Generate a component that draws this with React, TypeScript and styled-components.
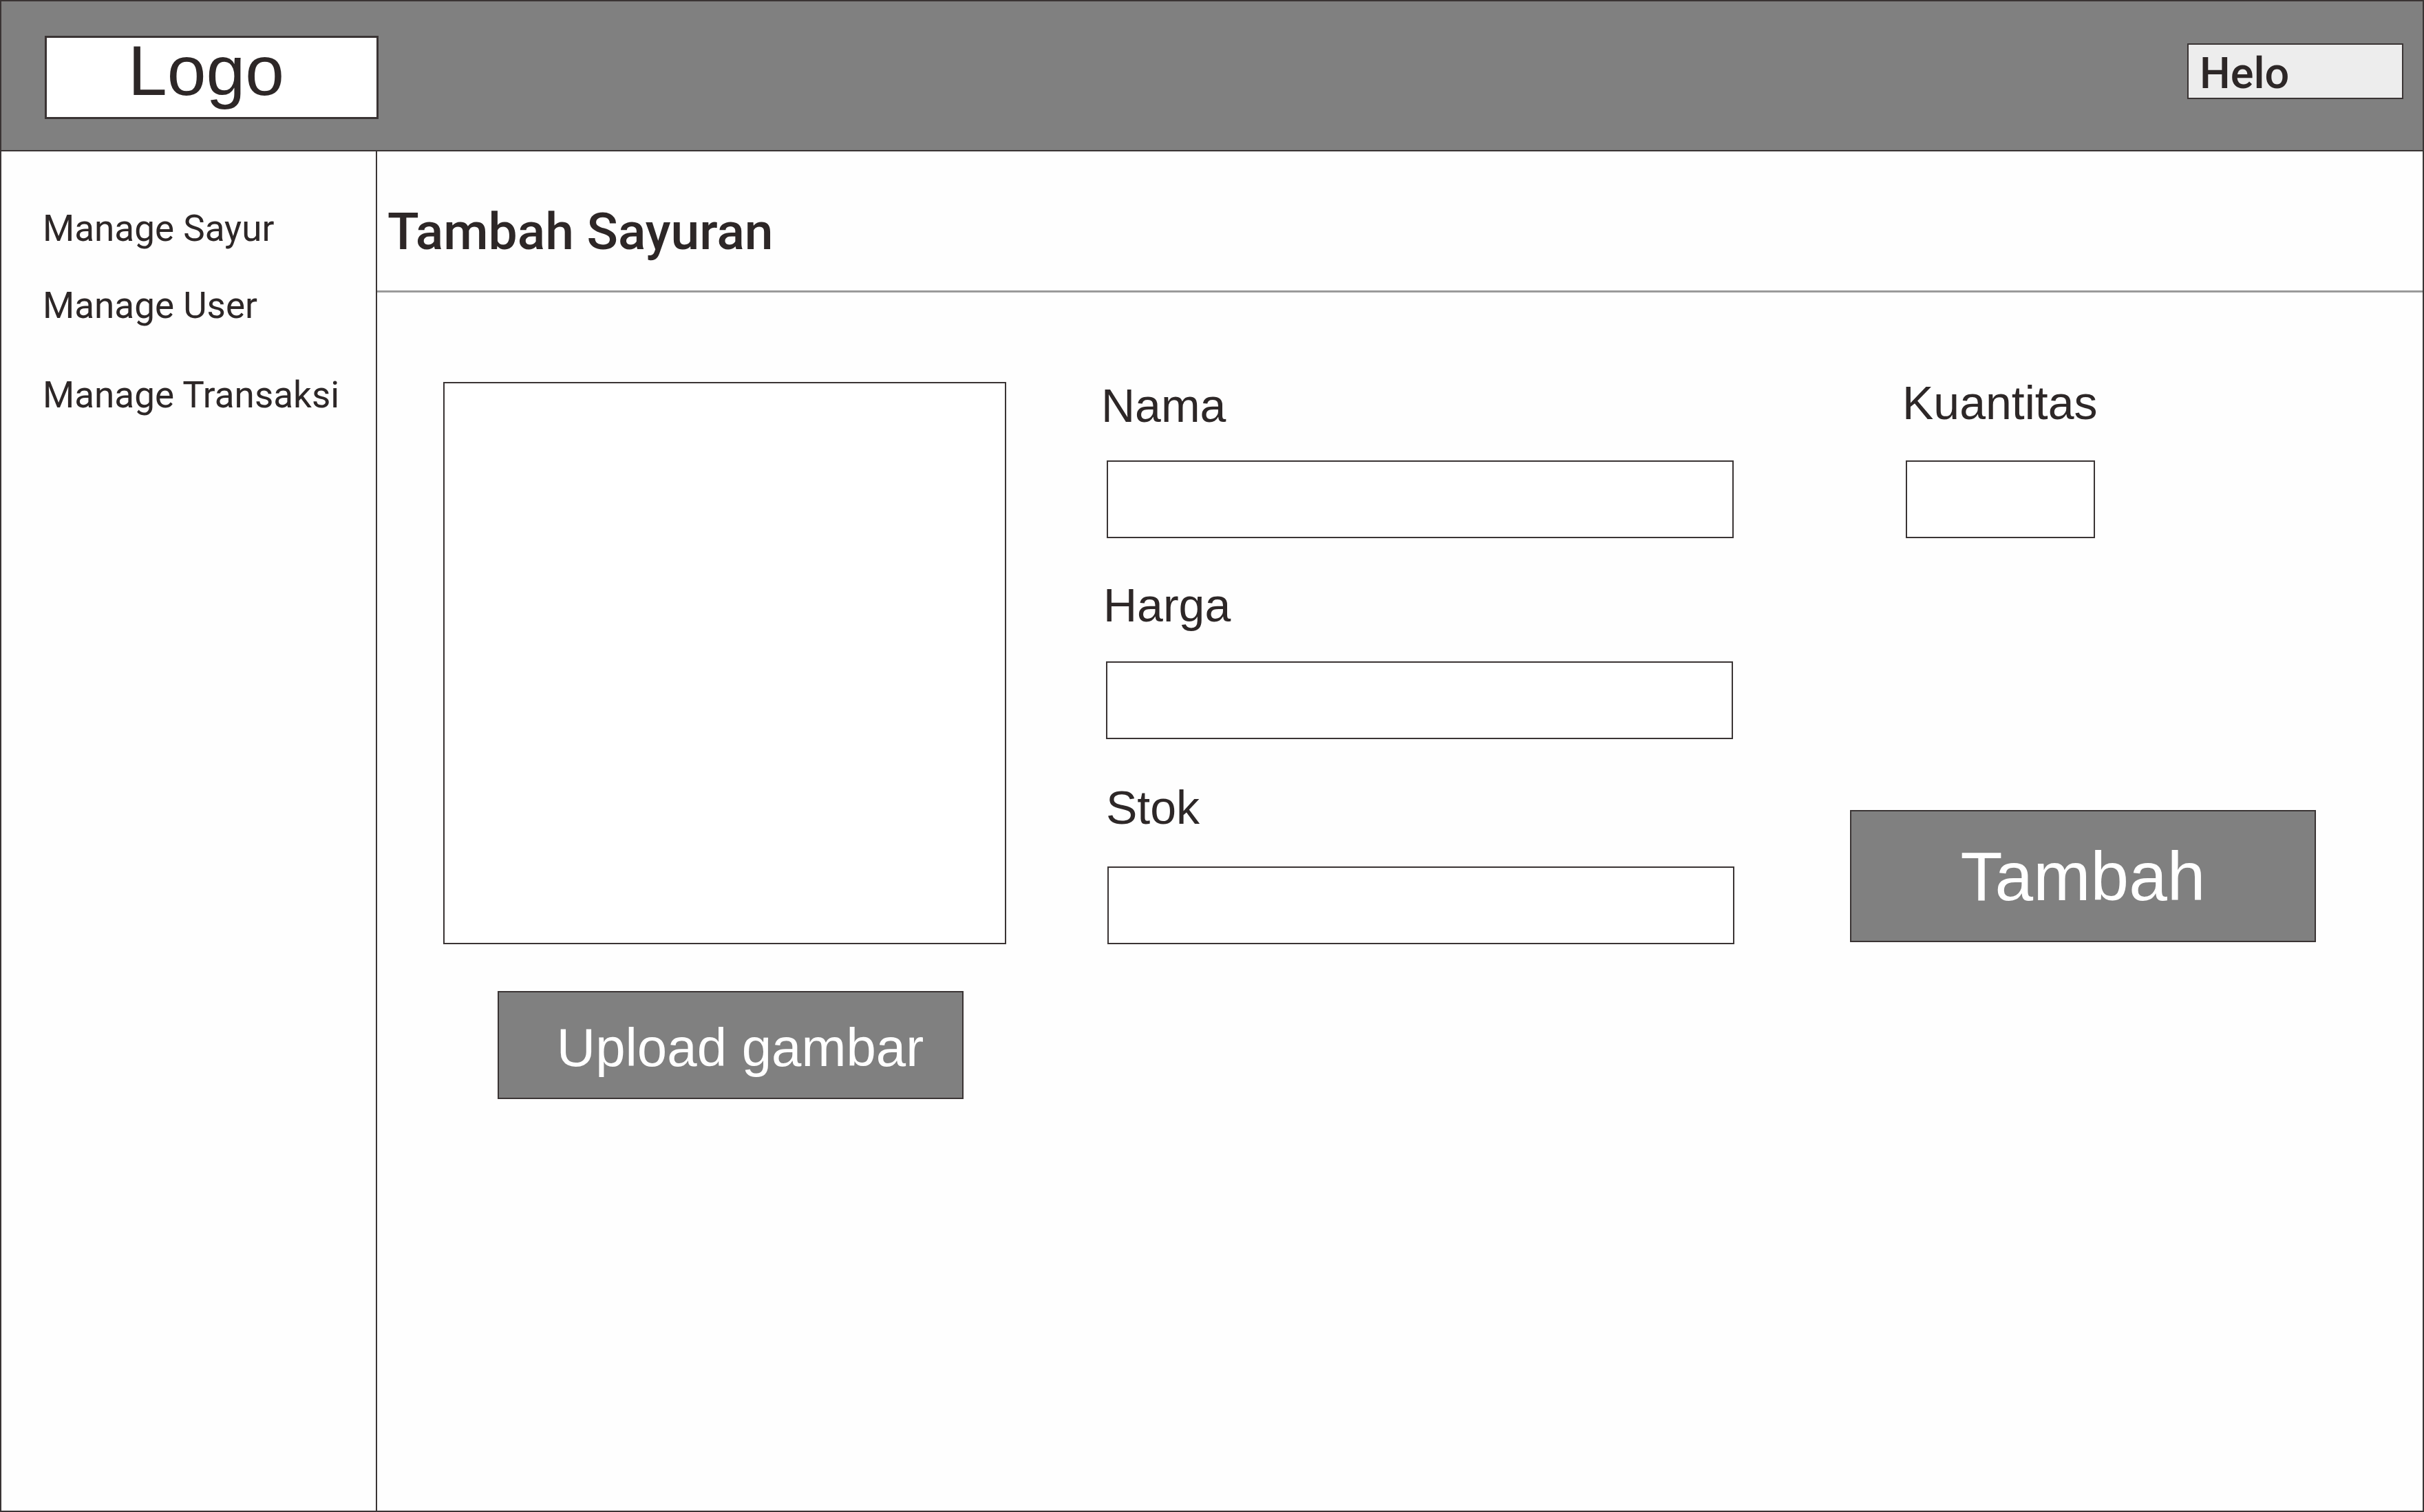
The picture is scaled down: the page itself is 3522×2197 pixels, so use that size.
import React from "react";
import styled, { createGlobalStyle } from "styled-components";

const INK = "#2d2727";
const LINE = "#3a3434";

const GlobalStyle = createGlobalStyle`
  html, body {
    margin: 0;
    padding: 0;
    background: #fefefe;
  }
  *, *::before, *::after {
    box-sizing: border-box;
  }
  body {
    font-family: "Liberation Sans", Arial, sans-serif;
    color: ${INK};
    overflow: hidden;
  }
`;

const Page = styled.div`
  width: 3522px;
  height: 2197px;
  border: 2px solid ${LINE};
  background: #fefefe;
  display: flex;
  flex-direction: column;
  overflow: hidden;
`;

const Header = styled.header`
  flex: none;
  height: 218px;
  background: #808080;
  border-bottom: 2px solid ${LINE};
  display: flex;
  align-items: flex-start;
  justify-content: space-between;
  padding: 50px 28px 0 63px;
`;

const LogoBox = styled.div`
  width: 485px;
  height: 121px;
  background: #ffffff;
  border: 3px solid ${LINE};
  display: flex;
  justify-content: center;
  align-items: flex-start;
  padding-right: 16px;
  font-family: "Liberation Sans", Arial, sans-serif;
  font-size: 102px;
  line-height: 97px;
  color: ${INK};
`;

const UserBox = styled.div`
  width: 314px;
  height: 81px;
  margin-top: 11px;
  background: #ededed;
  border: 2px solid ${LINE};
  padding: 10px 16px 0;
  font-family: Roboto, "Noto Sans", sans-serif;
  font-weight: 500;
  font-size: 63px;
  line-height: 1;
  color: ${INK};
`;

const Body = styled.div`
  flex: 1;
  display: flex;
  min-height: 0;
`;

const Sidebar = styled.nav`
  flex: none;
  width: 546px;
  border-right: 2px solid ${LINE};
  display: flex;
  flex-direction: column;
  align-items: flex-start;
  padding: 86px 0 0 60px;
`;

const NavItem = styled.div<{ $space: number }>`
  margin-top: ${(p) => p.$space}px;
  font-family: Roboto, "Noto Sans", sans-serif;
  font-weight: 400;
  font-size: 53px;
  line-height: 1;
  color: ${INK};
  white-space: nowrap;
`;

const Main = styled.main`
  flex: 1;
  display: flex;
  flex-direction: column;
  min-width: 0;
`;

const TitleBar = styled.div`
  padding: 79px 0 48px 15px;
  border-bottom: 3px solid #9a9a9a;
`;

const Title = styled.h1`
  margin: 0;
  font-family: Roboto, "Noto Sans", sans-serif;
  font-weight: 500;
  font-size: 75px;
  line-height: 1;
  color: ${INK};
`;

const FormArea = styled.div`
  display: flex;
  align-items: flex-start;
  padding: 130px 0 0 96px;
`;

const Column = styled.div<{ $width: number; $offset?: number }>`
  flex: none;
  width: ${(p) => p.$width}px;
  margin-left: ${(p) => p.$offset ?? 0}px;
  display: flex;
  flex-direction: column;
  align-items: flex-start;
`;

const ImageBox = styled.div`
  width: 818px;
  height: 817px;
  border: 2px solid ${LINE};
  background: #ffffff;
`;

const ActionButton = styled.button<{
  $w: number;
  $h: number;
  $size: number;
  $top: number;
  $left?: number;
  $padLeft?: number;
  $padTop?: number;
}>`
  appearance: none;
  width: ${(p) => p.$w}px;
  height: ${(p) => p.$h}px;
  margin: ${(p) => p.$top}px 0 0 ${(p) => p.$left ?? 0}px;
  padding: ${(p) => p.$padTop ?? 0}px 0 0 ${(p) => p.$padLeft ?? 0}px;
  background: #808080;
  border: 2px solid ${LINE};
  border-radius: 0;
  color: #ffffff;
  font-family: "Liberation Sans", Arial, sans-serif;
  font-size: ${(p) => p.$size}px;
  line-height: 1;
  display: flex;
  align-items: center;
  justify-content: center;
  cursor: pointer;
  white-space: nowrap;
`;

const FieldGroup = styled.div<{ $top?: number; $indent?: number }>`
  display: flex;
  flex-direction: column;
  align-items: flex-start;
  margin-top: ${(p) => p.$top ?? 0}px;
  padding-left: ${(p) => p.$indent ?? 0}px;
`;

const FieldLabel = styled.label<{ $gap: number; $nudge?: number }>`
  font-family: "Liberation Sans", Arial, sans-serif;
  font-size: 68px;
  line-height: 1;
  color: ${INK};
  margin: 0 0 ${(p) => p.$gap}px ${(p) => p.$nudge ?? 0}px;
  white-space: nowrap;
`;

const TextBox = styled.input<{ $w: number; $shift?: number }>`
  appearance: none;
  display: block;
  width: ${(p) => p.$w}px;
  height: 113px;
  margin: 0 0 0 ${(p) => p.$shift ?? 0}px;
  padding: 0 16px;
  border: 2px solid ${LINE};
  border-radius: 0;
  background: #ffffff;
  font-family: "Liberation Sans", Arial, sans-serif;
  font-size: 48px;
  color: ${INK};
  outline: none;
`;

const navItems = [
  { label: "Manage Sayur", space: 0 },
  { label: "Manage User", space: 59 },
  { label: "Manage Transaksi", space: 77 },
];

const fields = [
  { label: "Nama", top: 0, gap: 46, nudge: 0, shift: 8 },
  { label: "Harga", top: 63, gap: 48, nudge: 3, shift: 7 },
  { label: "Stok", top: 65, gap: 52, nudge: 7, shift: 9 },
];

export default function App() {
  return (
    <>
      <GlobalStyle />
      <Page>
        <Header>
          <LogoBox>Logo</LogoBox>
          <UserBox>Helo</UserBox>
        </Header>
        <Body>
          <Sidebar>
            {navItems.map((item) => (
              <NavItem key={item.label} $space={item.space}>
                {item.label}
              </NavItem>
            ))}
          </Sidebar>
          <Main>
            <TitleBar>
              <Title>Tambah Sayuran</Title>
            </TitleBar>
            <FormArea>
              <Column $width={818}>
                <ImageBox />
                <ActionButton
                  $w={677}
                  $h={157}
                  $size={78}
                  $top={68}
                  $left={79}
                  $padLeft={28}
                  $padTop={6}
                >
                  Upload gambar
                </ActionButton>
              </Column>
              <Column $width={919} $offset={138}>
                {fields.map((f) => (
                  <FieldGroup key={f.label} $top={f.top}>
                    <FieldLabel $gap={f.gap} $nudge={f.nudge}>
                      {f.label}
                    </FieldLabel>
                    <TextBox $w={911} $shift={f.shift} />
                  </FieldGroup>
                ))}
              </Column>
              <Column $width={677} $offset={169}>
                <FieldGroup $top={-4} $indent={76}>
                  <FieldLabel $gap={50}>Kuantitas</FieldLabel>
                  <TextBox $w={275} $shift={5} />
                </FieldGroup>
                <ActionButton $w={677} $h={192} $size={100} $top={395}>
                  Tambah
                </ActionButton>
              </Column>
            </FormArea>
          </Main>
        </Body>
      </Page>
    </>
  );
}
